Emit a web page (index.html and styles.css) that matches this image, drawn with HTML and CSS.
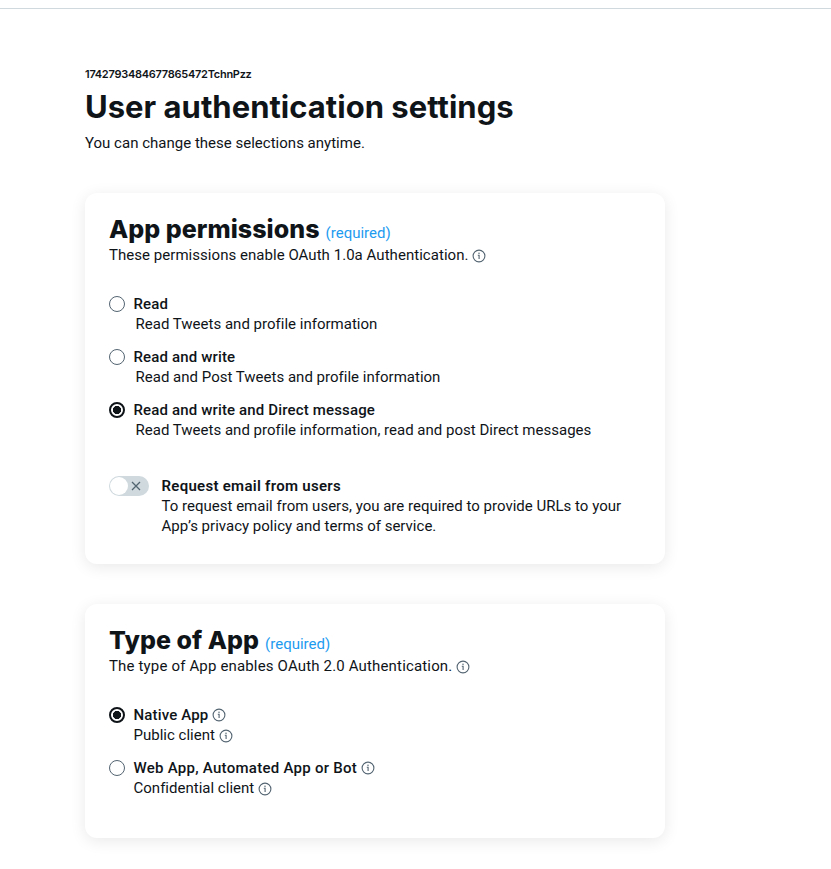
FILE: index.html
```html
<!DOCTYPE html>
<html lang="en">
<head>
<meta charset="utf-8">
<title>User authentication settings</title>
<link rel="stylesheet" href="styles.css">
</head>
<body>
<svg class="sprite" aria-hidden="true">
  <symbol id="info" viewBox="0 0 14 14">
    <circle cx="7" cy="7" r="5.9" fill="none" stroke="currentColor" stroke-width="1.1"/>
    <path d="M5.8 6.2h1.3v3.9" fill="none" stroke="currentColor" stroke-width="1.1"/>
    <circle cx="7" cy="4.2" r=".75" fill="currentColor"/>
  </symbol>
</svg>
<div class="divider"></div>
<main class="page">
  <header class="intro">
    <p class="app-id">1742793484677865472TchnPzz</p>
    <h1 class="title">User authentication settings</h1>
    <p class="text subtitle">You can change these selections anytime.</p>
  </header>

  <section class="card">
    <div class="card-head"><h2 class="heading">App permissions</h2><span class="required">(required)</span></div>
    <p class="text loose"><span>These permissions enable OAuth 1.0a Authentication.</span><svg class="info"><use href="#info"/></svg></p>
    <div class="options">
      <div class="option">
        <span class="radio"></span>
        <div class="option-body">
          <p class="label">Read</p>
          <p class="text indent">Read Tweets and profile information</p>
        </div>
      </div>
      <div class="option">
        <span class="radio"></span>
        <div class="option-body">
          <p class="label">Read and write</p>
          <p class="text indent">Read and Post Tweets and profile information</p>
        </div>
      </div>
      <div class="option">
        <span class="radio checked"></span>
        <div class="option-body">
          <p class="label">Read and write and Direct message</p>
          <p class="text indent">Read Tweets and profile information, read and post Direct messages</p>
        </div>
      </div>
    </div>
    <div class="email">
      <span class="toggle"><span class="knob"></span><svg class="cross" viewBox="0 0 10 10"><path d="M1 1l8 8M9 1L1 9" fill="none" stroke="currentColor" stroke-width="1.3"/></svg></span>
      <div>
        <p class="label strong">Request email from users</p>
        <p class="text"><span>To request email from users, you are required to provide URLs to your<br>App’s privacy policy and terms of service.</span></p>
      </div>
    </div>
  </section>

  <section class="card card-type">
    <div class="card-head"><h2 class="heading">Type of App</h2><span class="required">(required)</span></div>
    <p class="text wide"><span>The type of App enables OAuth 2.0 Authentication.</span><svg class="info"><use href="#info"/></svg></p>
    <div class="options">
      <div class="option">
        <span class="radio checked"></span>
        <div class="option-body">
          <p class="label"><span>Native App</span><svg class="info"><use href="#info"/></svg></p>
          <p class="text"><span>Public client</span><svg class="info"><use href="#info"/></svg></p>
        </div>
      </div>
      <div class="option">
        <span class="radio"></span>
        <div class="option-body">
          <p class="label wide"><span>Web App, Automated App or Bot</span><svg class="info"><use href="#info"/></svg></p>
          <p class="text"><span>Confidential client</span><svg class="info"><use href="#info"/></svg></p>
        </div>
      </div>
    </div>
  </section>
</main>
</body>
</html>
```
FILE: styles.css
```css
* { box-sizing: border-box; }
body {
  margin: 0;
  background: #fff;
  color: #0f1419;
  font-family: Roboto, "Liberation Sans", sans-serif;
}
p, h1, h2 { margin: 0; white-space: nowrap; }
.sprite { display: none; }
.divider { height: 9px; border-bottom: 1px solid #cfd9de; }
.page { width: 580px; margin-left: 85px; }
.intro { padding-top: 57px; height: 184px; }
.app-id { font: 600 11px/16px Inter, sans-serif; letter-spacing: -.27px; }
.title { font: 700 31px/36px Inter, sans-serif; letter-spacing: .02px; margin-top: 7px; }
.text, .label { display: flex; font-size: 15px; line-height: 20px; }
.text { letter-spacing: .01px; }
.text.loose { letter-spacing: .04px; }
.text.wide { letter-spacing: .16px; }
.subtitle { margin-top: 8px; }
.label { font-weight: 500; letter-spacing: .15px; }
.label.wide { letter-spacing: .27px; }
.strong { font-weight: 600; letter-spacing: .28px; }
.card {
  height: 371px;
  padding: 21px 24px 24px;
  border-radius: 12px;
  background: #fff;
  box-shadow: 0 3px 16px rgba(0, 0, 0, .09);
}
.card-type { height: 234px; margin: 40px 0 31px; }
.card-head { display: flex; align-items: baseline; height: 31px; }
.heading { font: 800 25px/30px Inter, sans-serif; letter-spacing: .05px; }
.required { margin-left: 6px; font-size: 15px; line-height: 20px; color: #1d9bf0; }
.info { width: 14px; height: 14px; margin: 4px 0 0 4px; color: #536471; flex: none; }
.label .info { margin-top: 3px; }
.options { display: grid; gap: 13px; margin-top: 29px; }
.option { display: flex; gap: 8.5px; }
.radio { width: 16px; height: 16px; margin-top: 2px; border: 1px solid #536471; border-radius: 50%; flex: none; }
.radio.checked { border: 2px solid #0f1419; background: radial-gradient(circle, #0f1419 3.8px, #fff 4.4px); }
.indent { padding-left: 2px; }
.email { display: flex; gap: 12.5px; margin-top: 36px; }
.toggle { display: flex; align-items: center; justify-content: space-between; width: 40px; height: 20px; padding: 0 8px 0 1px; border-radius: 10px; background: #cfd9de; }
.knob { width: 18px; height: 18px; border-radius: 50%; background: #fff; }
.cross { width: 10px; height: 10px; margin-bottom: 1px; color: #536471; }
```
